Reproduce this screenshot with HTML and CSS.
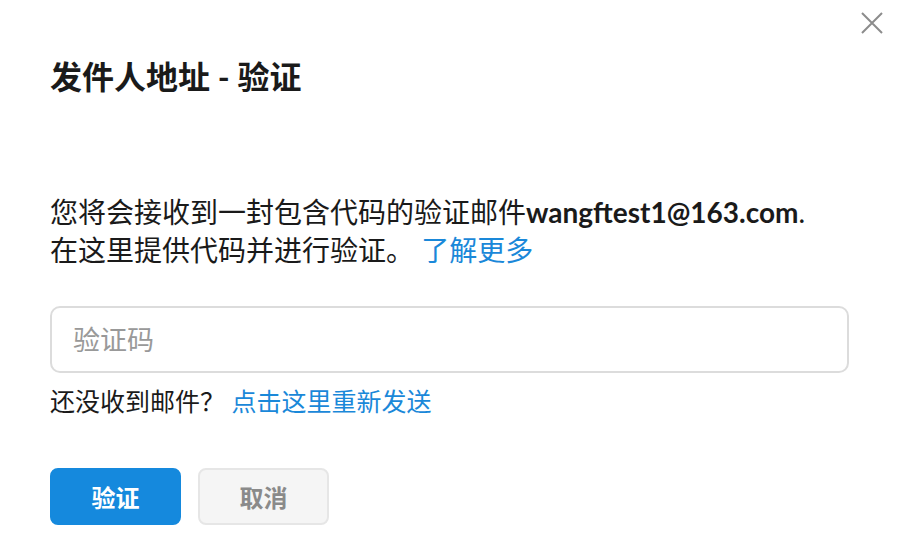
FILE: index.html
```html
<!DOCTYPE html>
<html lang="zh-CN">
<head>
  <meta charset="UTF-8">
  <meta name="viewport" content="width=device-width, initial-scale=1.0">
  <title>发件人地址 - 验证</title>
  <link rel="stylesheet" href="styles.css">
</head>
<body>

  <div class="dialog">
    <button class="close" aria-label="关闭">
      <svg width="22" height="22" viewBox="0 0 22 22">
        <path d="M1 1 L21 21 M21 1 L1 21" stroke="#8c8c8c" stroke-width="2" fill="none"/>
      </svg>
    </button>

    <h2>发件人地址 - 验证</h2>

    <p class="intro">
      您将会接收到一封包含代码的验证邮件<b>wangftest1@163.com</b>.<br>
      在这里提供代码并进行验证。 <a href="#">了解更多</a>
    </p>

    <input type="text" class="code" placeholder="验证码">

    <p class="resend">还没收到邮件？ <a href="#">点击这里重新发送</a></p>

    <div class="actions">
      <button class="btn primary">验证</button>
      <button class="btn">取消</button>
    </div>
  </div>

</body>
</html>
```

FILE: styles.css
```css
body {
  margin: 0;
  font-family: "Lato", "Noto Sans CJK SC", sans-serif;
  color: #1a1a1a;
  background-color: #fff;
}

.dialog {
  position: relative;
  padding: 57px 59px 0 50px;
}

.close {
  position: absolute;
  top: 12px;
  right: 25px;
  padding: 0;
  border: none;
  background: none;
  cursor: pointer;
}

.close svg {
  display: block;
}

h2 {
  margin: 0;
  font-size: 32px;
  line-height: 40px;
  font-weight: bold;
}

.intro {
  margin: 96px 0 0;
  font-size: 28px;
  line-height: 38px;
}

.intro b {
  font-weight: bold;
}

a {
  color: #1a88d9;
  text-decoration: none;
}

.code {
  display: block;
  box-sizing: border-box;
  width: 100%;
  height: 67px;
  margin-top: 37px;
  padding: 0 21px;
  border: 2px solid #dcdcdc;
  border-radius: 10px;
  font-family: inherit;
  font-size: 27px;
  color: #1a1a1a;
}

.code::placeholder {
  color: #999;
}

.resend {
  margin: 13px 0 0;
  font-size: 25px;
  line-height: 30px;
}

.actions {
  display: flex;
  gap: 17px;
  margin-top: 52px;
}

.btn {
  box-sizing: border-box;
  width: 131px;
  height: 57px;
  border: 2px solid #e6e6e6;
  border-radius: 8px;
  background-color: #f5f5f5;
  color: #8a8a8a;
  font-family: inherit;
  font-size: 24px;
  font-weight: bold;
  cursor: pointer;
}

.btn.primary {
  border-color: #1589dd;
  background-color: #1589dd;
  color: #fff;
}
```
